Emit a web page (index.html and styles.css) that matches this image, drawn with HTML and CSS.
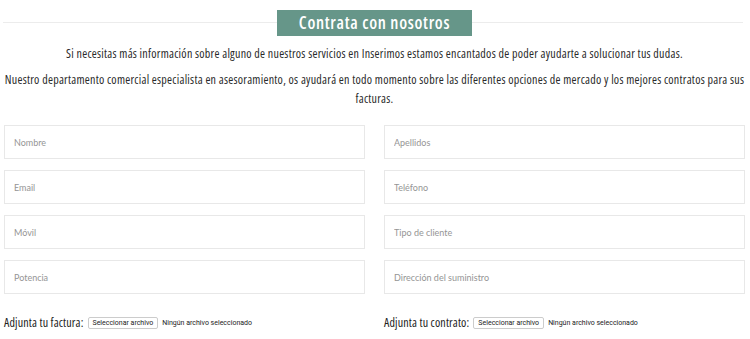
FILE: index.html
```html
<!DOCTYPE html>
<html lang="es">
<head>
  <meta charset="UTF-8">
  <meta name="viewport" content="width=device-width, initial-scale=1">
  <title>Contrata con nosotros</title>
  <link rel="stylesheet" href="styles.css">
</head>

<body>

<div class="container">

  <!-- Title -->
  <div class="title-row">
    <h2>Contrata con nosotros</h2>
  </div>

  <p class="intro">Si necesitas más información sobre alguno de nuestros servicios en Inserimos estamos encantados de poder ayudarte a solucionar tus dudas.</p>
  <p class="intro">Nuestro departamento comercial especialista en asesoramiento, os ayudará en todo momento sobre las diferentes opciones de mercado y los mejores contratos para sus facturas.</p>

  <!-- Contact Form -->
  <form class="contract-form">
    <input type="text" placeholder="Nombre">
    <input type="text" placeholder="Apellidos">
    <input type="email" placeholder="Email">
    <input type="tel" placeholder="Teléfono">
    <input type="tel" placeholder="Móvil">
    <input type="text" placeholder="Tipo de cliente">
    <input type="text" placeholder="Potencia">
    <input type="text" placeholder="Dirección del suministro">

    <div class="file-row">
      <span class="file-label">Adjunta tu factura:</span>
      <button type="button" class="file-btn">Seleccionar archivo</button>
      <span class="file-name">Ningún archivo seleccionado</span>
    </div>
    <div class="file-row">
      <span class="file-label">Adjunta tu contrato:</span>
      <button type="button" class="file-btn">Seleccionar archivo</button>
      <span class="file-name">Ningún archivo seleccionado</span>
    </div>
  </form>

</div>

</body>
</html>
```

FILE: styles.css
```css
* {
  box-sizing: border-box;
  padding: 0;
  margin: 0;
}

body {
  font-family: "Open Sans", Arial, sans-serif;
  background: #fff;
  color: #222;
}

.container {
  padding: 10px 5px 0 4px;
}

/* Title */
.title-row {
  display: flex;
  justify-content: center;
  align-items: center;
  position: relative;
  height: 26px;
}

.title-row::before {
  content: "";
  position: absolute;
  left: -1px;
  right: 2px;
  top: 12px;
  height: 1px;
  background: #ececec;
}

h2 {
  position: relative;
  background: #669689;
  color: #fff;
  font-size: 17px;
  font-weight: 600;
  font-stretch: 75%;
  letter-spacing: 0.7px;
  line-height: 26px;
  width: 195px;
  text-align: center;
}

.intro {
  font-size: 12px;
  font-stretch: 75%;
  letter-spacing: 0.26px;
  line-height: 19px;
  text-align: center;
  color: #2a2a2a;
}

.intro:first-of-type {
  margin-top: 8px;
  margin-bottom: 7px;
}

/* Form */
.contract-form {
  display: grid;
  grid-template-columns: 1fr 1fr;
  column-gap: 19px;
  row-gap: 11px;
  margin-top: 17px;
}

input {
  height: 34px;
  padding: 0 9px;
  border: 1px solid #e8e8e8;
  font-family: Lato, "Open Sans", sans-serif;
  font-size: 9px;
  color: #555;
  outline: none;
}

input::placeholder {
  color: #959595;
}

.file-row {
  display: flex;
  align-items: center;
  margin-top: 9px;
}

.file-label {
  font-size: 12px;
  font-stretch: 75%;
  letter-spacing: 0.15px;
  margin-right: 4px;
}

.file-btn {
  font-family: Roboto, Arial, sans-serif;
  font-size: 7px;
  color: #222;
  background: #fff;
  border: 1px solid #ccc;
  border-radius: 2px;
  padding: 1px 4px;
  height: 12px;
  line-height: 8px;
}

.file-name {
  font-family: Roboto, Arial, sans-serif;
  font-size: 7px;
  color: #222;
  margin-left: 4px;
}
```
